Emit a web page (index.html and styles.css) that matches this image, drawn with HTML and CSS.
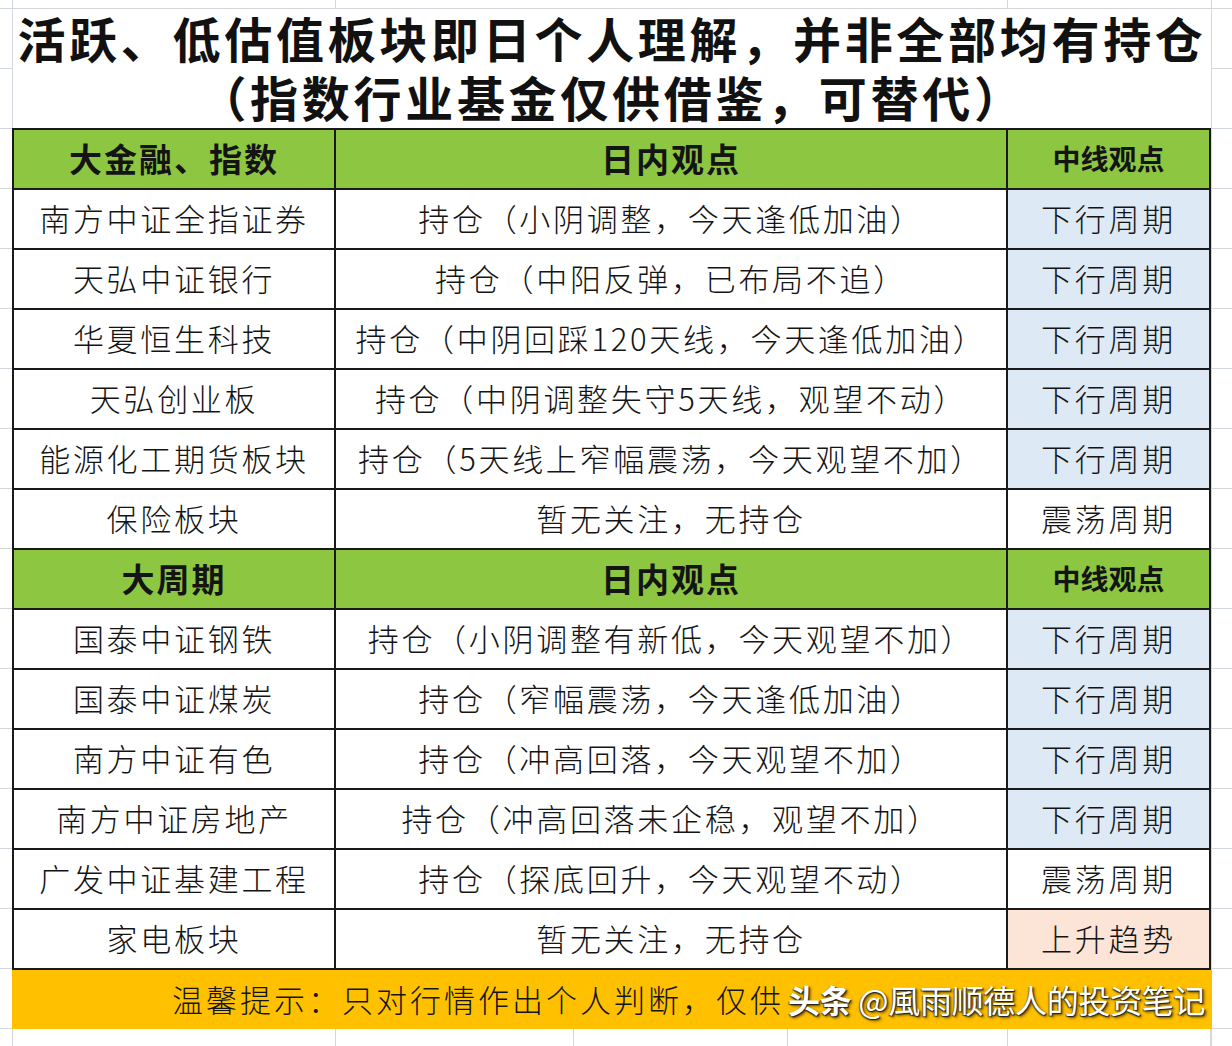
FILE: index.html
```html
<!DOCTYPE html>
<html lang="zh-CN">
<head>
<meta charset="utf-8">
<title>活跃、低估值板块</title>
<link rel="stylesheet" href="styles.css">
</head>
<body>
<div class="sheet">
  <div class="strip top-strip">
    <span class="gc w1"></span><span class="gc w2"></span><span class="gc w3"></span>
  </div>
  <div class="title">
    <div class="title-line first">活跃、低估值板块即日个人理解，并非全部均有持仓</div>
    <div class="title-line second">（指数行业基金仅供借鉴，可替代）</div>
  </div>
  <div class="table">
    <div class="cell head">大金融、指数</div>
    <div class="cell head">日内观点</div>
    <div class="cell head small">中线观点</div>

    <div class="cell">南方中证全指证券</div>
    <div class="cell">持仓（小阴调整，今天逢低加油）</div>
    <div class="cell blue">下行周期</div>

    <div class="cell">天弘中证银行</div>
    <div class="cell">持仓（中阳反弹，已布局不追）</div>
    <div class="cell blue">下行周期</div>

    <div class="cell">华夏恒生科技</div>
    <div class="cell">持仓（中阴回踩120天线，今天逢低加油）</div>
    <div class="cell blue">下行周期</div>

    <div class="cell">天弘创业板</div>
    <div class="cell">持仓（中阴调整失守5天线，观望不动）</div>
    <div class="cell blue">下行周期</div>

    <div class="cell">能源化工期货板块</div>
    <div class="cell">持仓（5天线上窄幅震荡，今天观望不加）</div>
    <div class="cell blue">下行周期</div>

    <div class="cell">保险板块</div>
    <div class="cell">暂无关注，无持仓</div>
    <div class="cell">震荡周期</div>

    <div class="cell head">大周期</div>
    <div class="cell head">日内观点</div>
    <div class="cell head small">中线观点</div>

    <div class="cell">国泰中证钢铁</div>
    <div class="cell">持仓（小阴调整有新低，今天观望不加）</div>
    <div class="cell blue">下行周期</div>

    <div class="cell">国泰中证煤炭</div>
    <div class="cell">持仓（窄幅震荡，今天逢低加油）</div>
    <div class="cell blue">下行周期</div>

    <div class="cell">南方中证有色</div>
    <div class="cell">持仓（冲高回落，今天观望不加）</div>
    <div class="cell blue">下行周期</div>

    <div class="cell">南方中证房地产</div>
    <div class="cell">持仓（冲高回落未企稳，观望不加）</div>
    <div class="cell blue">下行周期</div>

    <div class="cell">广发中证基建工程</div>
    <div class="cell">持仓（探底回升，今天观望不动）</div>
    <div class="cell">震荡周期</div>

    <div class="cell">家电板块</div>
    <div class="cell">暂无关注，无持仓</div>
    <div class="cell peach">上升趋势</div>
  </div>
  <div class="footer">
    <span class="footer-text">温馨提示：只对行情作出个人判断，仅供</span>
    <span class="watermark"><b>头条</b> @風雨顺德人的投资笔记</span>
  </div>
  <div class="strip bottom-strip">
    <span class="gc b1"></span><span class="gc b2"></span><span class="gc b3"></span><span class="gc b4"></span><span class="gc b5"></span>
  </div>
</div>
</body>
</html>
```

FILE: styles.css
```css
html, body {
  margin: 0;
  padding: 0;
  background: #ffffff;
}

.sheet {
  width: 1232px;
  height: 1046px;
  overflow: hidden;
  font-family: "Noto Sans CJK SC", "Noto Sans", sans-serif;
  color: #141414;
  background-color: #ffffff;
  background-image:
    linear-gradient(to right, transparent 12px, #d3d8df 12px, #d3d8df 13px, transparent 13px),
    linear-gradient(to right, transparent 1211px, #d3d8df 1211px, #d3d8df 1212px, transparent 1212px),
    repeating-linear-gradient(to bottom, transparent 0, transparent 8px, #d3d8df 8px, #d3d8df 9px, transparent 9px, transparent 60px);
}

.strip {
  display: flex;
  margin-left: 12px;
}

.top-strip {
  height: 8px;
}

.gc {
  display: block;
  height: 100%;
  border-left: 1px solid #d3d8df;
  box-sizing: border-box;
}

.w1 { width: 323px; }
.w2 { width: 672px; }
.w3 { width: 204px; }

.title {
  margin: 1px 0 0 13px;
  width: 1198px;
  height: 119px;
  box-sizing: border-box;
  background: #ffffff;
  display: flex;
  flex-direction: column;
  align-items: center;
}

.title-line {
  font-size: 48px;
  font-weight: 700;
  letter-spacing: 3.7px;
  white-space: nowrap;
  color: #111111;
}

.title-line.first {
  height: 56px;
  line-height: 56px;
}

.title-line.second {
  height: 62px;
  line-height: 62px;
}

.table {
  margin-left: 12px;
  width: 1199px;
  box-sizing: border-box;
  padding: 2px;
  display: grid;
  grid-template-columns: 320px 670px 201px;
  grid-auto-rows: 58px;
  gap: 2px;
  background: #1a1a1a;
}

.cell {
  background: #ffffff;
  display: flex;
  align-items: center;
  justify-content: center;
  padding-bottom: 3px;
  box-sizing: border-box;
  font-size: 31px;
  font-weight: 300;
  letter-spacing: 2.7px;
  white-space: nowrap;
}

.cell.head {
  background: #8dc641;
  font-size: 33px;
  font-weight: 700;
  letter-spacing: 2px;
  padding-bottom: 2px;
}

.cell.head.small {
  font-size: 28px;
  letter-spacing: 0;
}

.cell.blue {
  background: #dde9f4;
}

.cell.peach {
  background: #fce4d6;
}

.footer {
  position: relative;
  margin-left: 12px;
  width: 1200px;
  height: 59px;
  background: #ffc000;
  display: flex;
  align-items: center;
  padding-left: 160px;
  padding-bottom: 2px;
  box-sizing: border-box;
}

.footer-text {
  font-size: 31px;
  font-weight: 300;
  letter-spacing: 3px;
  white-space: nowrap;
}

.watermark {
  position: absolute;
  left: 776px;
  top: 50%;
  transform: translateY(-52%);
  font-size: 32px;
  font-weight: 400;
  color: #ffffff;
  white-space: nowrap;
  letter-spacing: -0.3px;
  text-shadow: 1px 1px 1px #222222, -1px 1px 1px rgba(0,0,0,0.5), 2px 2px 3px rgba(0,0,0,0.6);
}

.watermark b {
  font-weight: 700;
}

.bottom-strip {
  height: 17px;
}

.b1 { width: 323px; }
.b2 { width: 238px; }
.b3 { width: 214px; }
.b4 { width: 220px; }
.b5 { width: 204px; border-right: 1px solid #d3d8df; }
```
